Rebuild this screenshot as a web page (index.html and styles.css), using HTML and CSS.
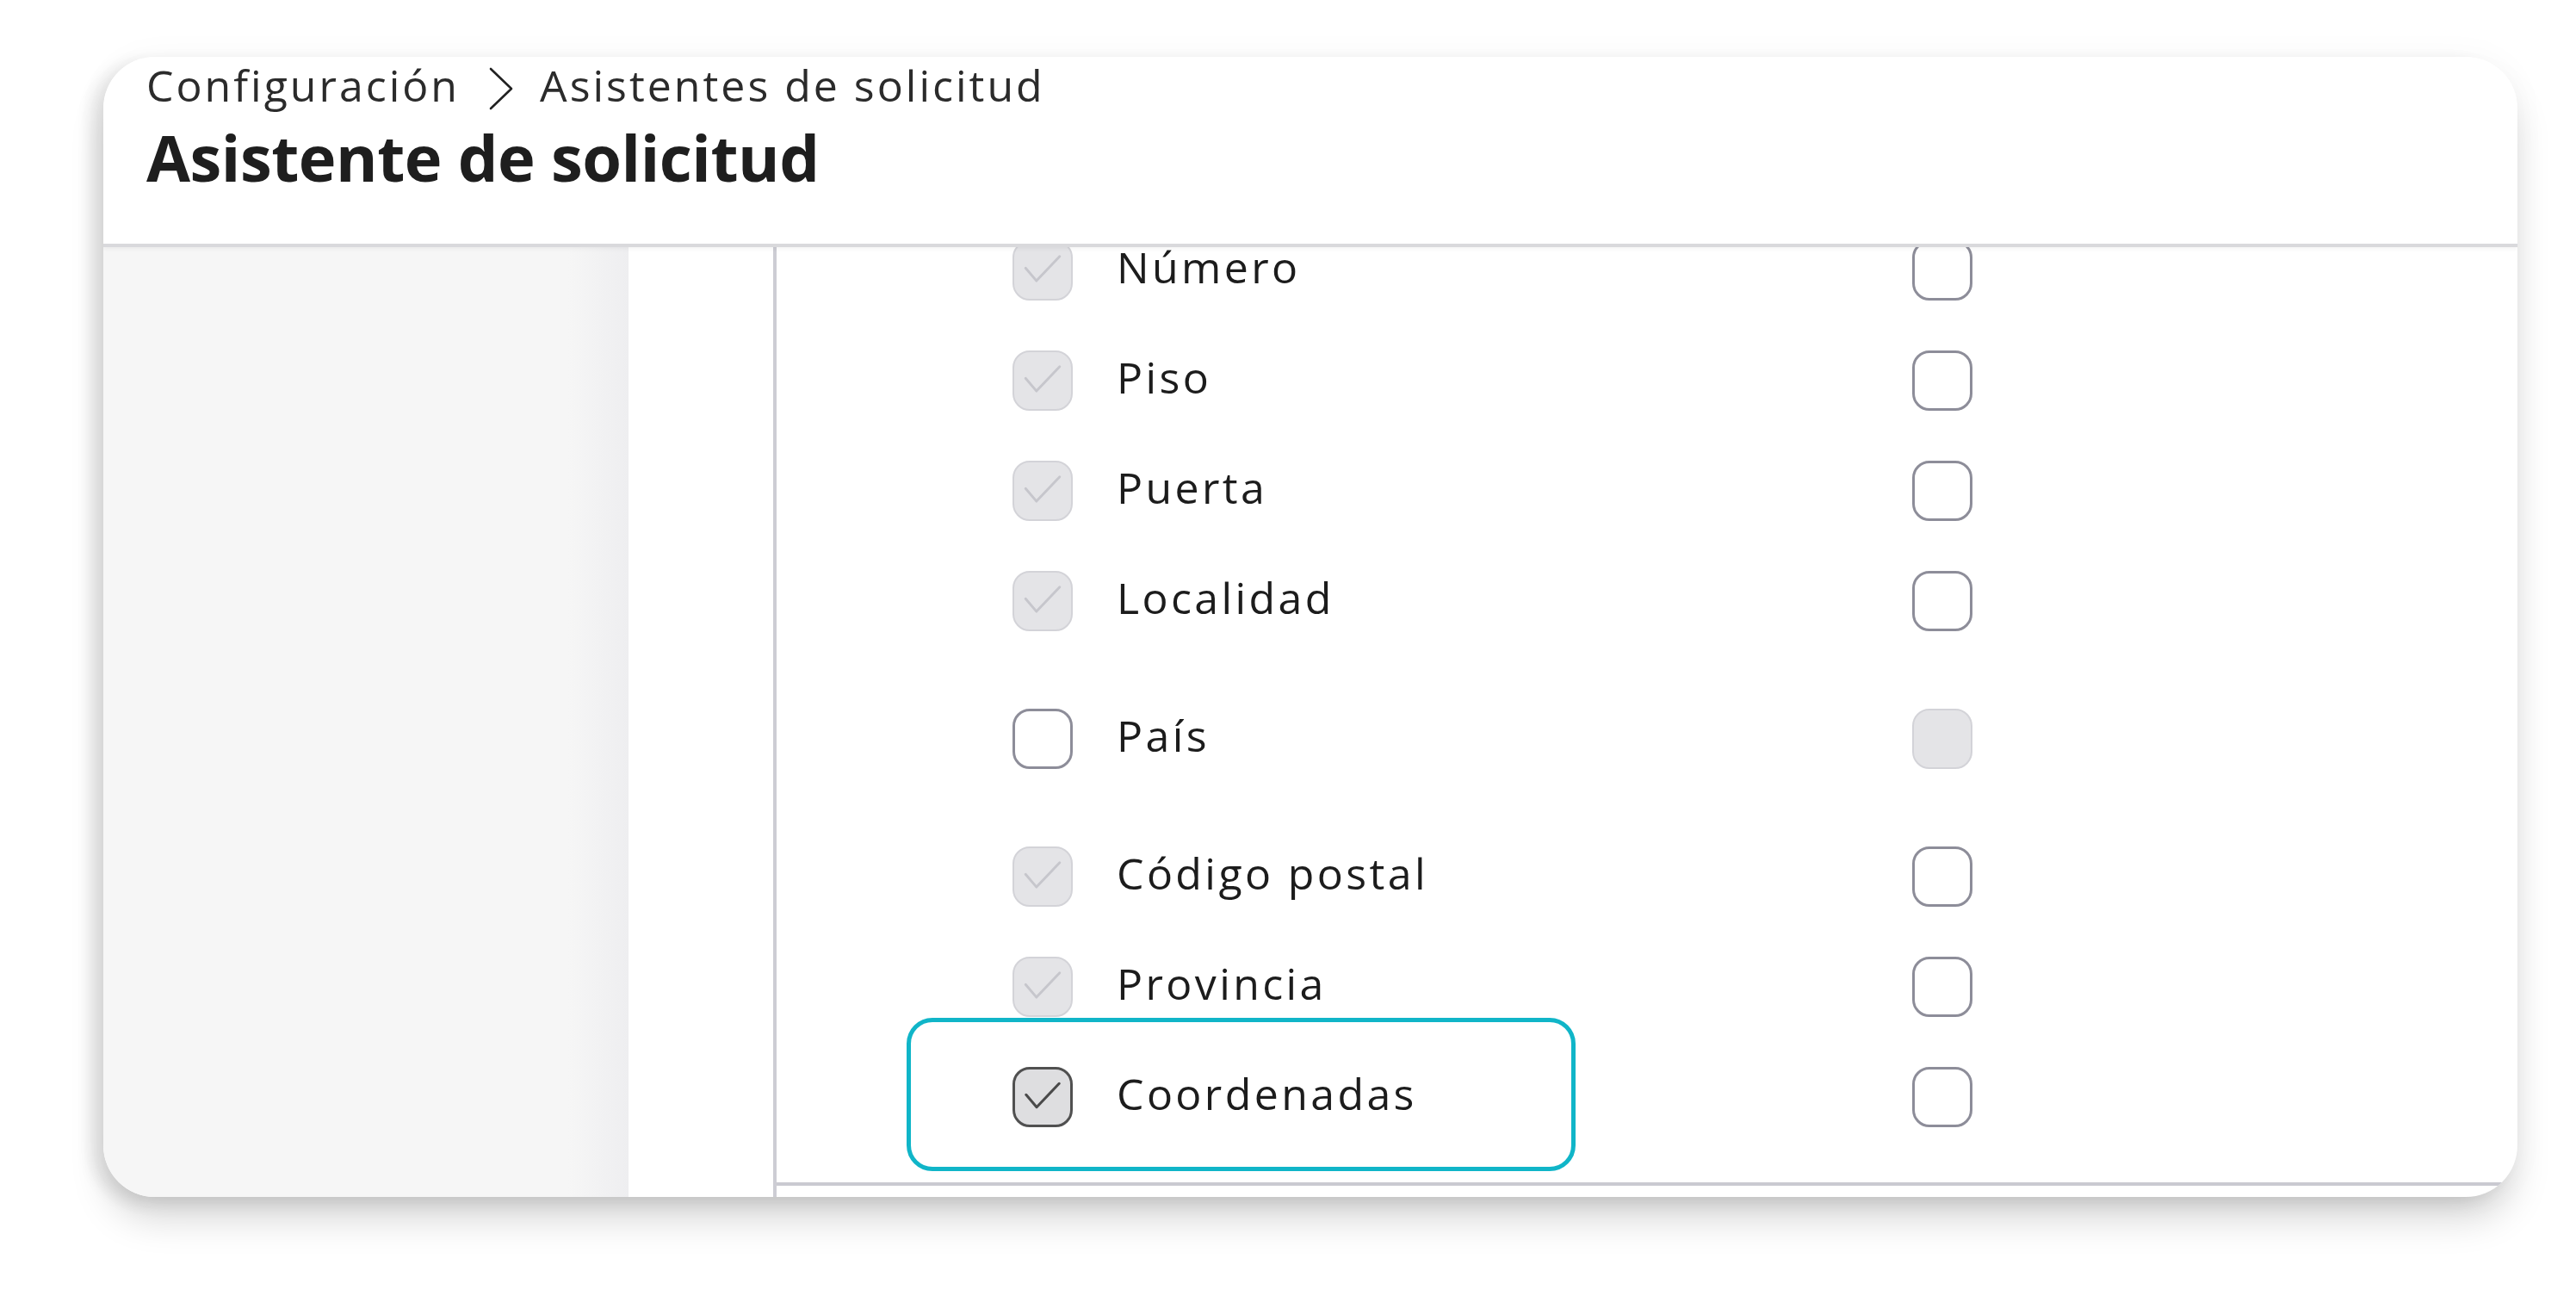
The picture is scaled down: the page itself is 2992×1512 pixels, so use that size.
FILE: index.html
```html
<!DOCTYPE html>
<html lang="es">
<head>
<meta charset="utf-8">
<title>Asistente de solicitud</title>
<link rel="stylesheet" href="styles.css">
</head>
<body>
<div class="stage">
<div class="card">
  <header class="head">
    <nav class="crumbs">
      <span>Configuración</span>
      <svg class="chev" viewBox="0 0 30 50"><path d="M3 2 L27 25 L3 48"/></svg>
      <span>Asistentes de solicitud</span>
    </nav>
    <h1 class="title">Asistente de solicitud</h1>
  </header>
  <div class="body">
    <aside class="side"></aside>
    <div class="gutter"></div>
    <section class="panel">
      <ul class="fields">
        <li class="row">
          <span class="cb cb-locked"><svg viewBox="0 0 24 24"><path d="M4.8 11 L9.4 16.4 L19.2 6.1"/></svg></span>
          <span class="label">Número</span>
          <span class="cb"></span>
        </li>
        <li class="row">
          <span class="cb cb-locked"><svg viewBox="0 0 24 24"><path d="M4.8 11 L9.4 16.4 L19.2 6.1"/></svg></span>
          <span class="label">Piso</span>
          <span class="cb"></span>
        </li>
        <li class="row">
          <span class="cb cb-locked"><svg viewBox="0 0 24 24"><path d="M4.8 11 L9.4 16.4 L19.2 6.1"/></svg></span>
          <span class="label">Puerta</span>
          <span class="cb"></span>
        </li>
        <li class="row">
          <span class="cb cb-locked"><svg viewBox="0 0 24 24"><path d="M4.8 11 L9.4 16.4 L19.2 6.1"/></svg></span>
          <span class="label">Localidad</span>
          <span class="cb"></span>
        </li>
        <li class="row row-tall">
          <span class="cb"></span>
          <span class="label">País</span>
          <span class="cb cb-locked"></span>
        </li>
        <li class="row">
          <span class="cb cb-locked"><svg viewBox="0 0 24 24"><path d="M4.8 11 L9.4 16.4 L19.2 6.1"/></svg></span>
          <span class="label">Código postal</span>
          <span class="cb"></span>
        </li>
        <li class="row">
          <span class="cb cb-locked"><svg viewBox="0 0 24 24"><path d="M4.8 11 L9.4 16.4 L19.2 6.1"/></svg></span>
          <span class="label">Provincia</span>
          <span class="cb"></span>
        </li>
        <li class="row row-focus">
          <span class="cb cb-checked"><svg viewBox="0 0 24 24"><path d="M4.8 11 L9.4 16.4 L19.2 6.1"/></svg></span>
          <span class="label">Coordenadas</span>
          <span class="cb"></span>
        </li>
      </ul>
    </section>
  </div>
</div>
</div>
</body>
</html>
```

FILE: styles.css
```css
html, body {
  margin: 0;
  background: #ffffff;
}

body {
  font-family: "Open Sans", "Noto Sans", sans-serif;
  color: #1c1c1c;
}

.stage {
  width: 2992px;
  height: 1512px;
  box-sizing: border-box;
  padding: 66px 0 0 120px;
  background: #ffffff;
}

.card {
  width: 2804px;
  height: 1324px;
  background: #ffffff;
  border-radius: 60px;
  overflow: hidden;
  display: flex;
  flex-direction: column;
  box-shadow:
    0 30px 44px -6px rgba(0, 0, 0, 0.17),
    -14px 6px 18px rgba(0, 0, 0, 0.09),
    0 0 40px rgba(0, 0, 0, 0.035);
}

.head {
  flex: none;
  height: 221px;
  box-sizing: border-box;
  padding: 3px 0 0 50px;
  border-bottom: 4px solid #d9d9dc;
  box-shadow: 0 2px 5px rgba(0, 0, 0, 0.05);
  position: relative;
  z-index: 1;
  background: #ffffff;
}

.crumbs {
  display: flex;
  align-items: flex-start;
  font-size: 50px;
  line-height: 60px;
  letter-spacing: 3px;
  color: #2b2b2b;
}

.chev {
  width: 30px;
  height: 50px;
  margin: 9px 30px 0 33px;
  fill: none;
  stroke: #222222;
  stroke-width: 2.6;
  stroke-linecap: round;
  stroke-linejoin: round;
}

.title {
  margin: 9px 0 0;
  font-size: 74px;
  line-height: 90px;
  font-weight: 700;
  letter-spacing: -0.5px;
  color: #1e1e1e;
}

.body {
  flex: 1;
  min-height: 0;
  display: flex;
  overflow: hidden;
}

.side {
  flex: none;
  width: 610px;
  background: linear-gradient(90deg, #f6f6f6 0, #f6f6f6 calc(100% - 70px), #eeeef0 100%);
}

.gutter {
  flex: none;
  width: 168px;
}

.panel {
  flex: 1;
  border-left: 4px solid #cdcdd4;
}

.fields {
  list-style: none;
  margin: -37px 0 0;
  padding: 0 0 35px;
  border-bottom: 4px solid #cacad1;
}

.row {
  position: relative;
  display: grid;
  grid-template-columns: 70px 873px 70px;
  column-gap: 51px;
  align-items: center;
  height: 128px;
  padding-left: 274px;
}

.row-tall {
  height: 192px;
}

.label {
  font-size: 50px;
  line-height: 60px;
  letter-spacing: 3.4px;
  color: #1c1c1c;
  padding-bottom: 8px;
}

.cb {
  width: 70px;
  height: 70px;
  box-sizing: border-box;
  border-radius: 20px;
  border: 3px solid #8d8d99;
  background: #ffffff;
  display: flex;
}

.cb svg {
  width: 100%;
  height: 100%;
  fill: none;
  stroke-linecap: round;
  stroke-linejoin: round;
}

.cb-locked {
  border: 2.5px solid #d3d3d8;
  background: #e4e4e7;
}

.cb-locked svg {
  stroke: #c6c6cc;
  stroke-width: 1.05;
}

.cb-checked {
  border-color: #505050;
  background: #dedee0;
}

.cb-checked svg {
  stroke: #4a4a4a;
  stroke-width: 1.15;
}

.row-focus::before {
  content: "";
  position: absolute;
  left: 151px;
  top: -28px;
  width: 777px;
  height: 178px;
  box-sizing: border-box;
  border: 5px solid #10b5c8;
  border-radius: 30px;
  pointer-events: none;
}
```
